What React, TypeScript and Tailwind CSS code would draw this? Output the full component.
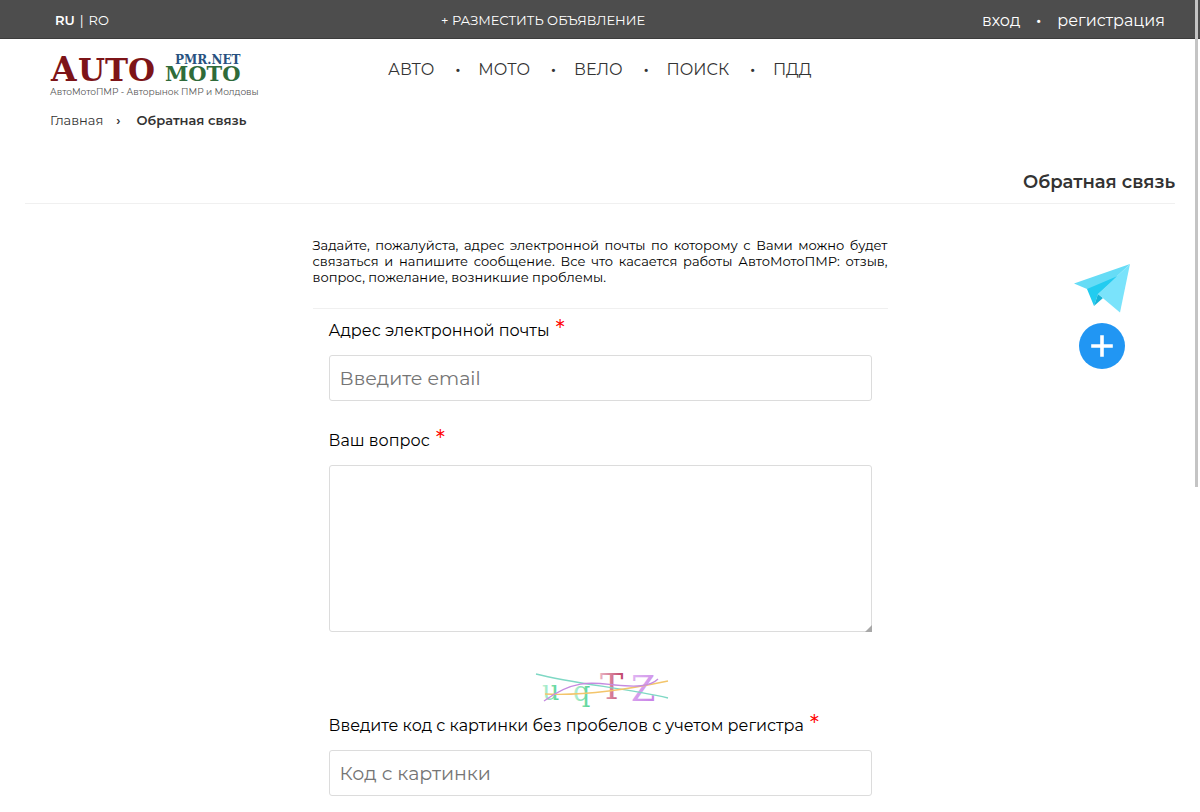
import React, { useState } from "react";
import { clsx } from "clsx";

const NAV_ITEMS = [
  { label: "АВТО", href: "#avto" },
  { label: "МОТО", href: "#moto" },
  { label: "ВЕЛО", href: "#velo" },
  { label: "ПОИСК", href: "#search" },
  { label: "ПДД", href: "#pdd" },
];

const INPUT_CLASS =
  "w-full rounded-[3px] border border-[#dcdcdc] bg-white px-[10px] text-[19px] text-gray-700 placeholder:text-[#757575] focus:border-sky-400 focus:outline-none";

function Logo() {
  return (
    <svg width="210" height="38" viewBox="0 0 210 38" role="img" aria-label="AutoMoto PMR.NET">
      <g fontFamily="'DejaVu Serif', serif" fontWeight="700">
        <text x="1" y="31" fontSize="33" fill="#7d1418">A</text>
        <text x="28" y="31" fontSize="31" fill="#7d1418">UTO</text>
        <text x="125" y="14" fontSize="12" fill="#27517f">PMR.NET</text>
        <text x="115" y="31" fontSize="21" fill="#2f6b3a">MOTO</text>
      </g>
    </svg>
  );
}

function Captcha() {
  return (
    <svg width="134" height="44" viewBox="0 0 134 44" role="img" aria-label="Код">
      <defs>
        <linearGradient id="green" x1="0" x2="1">
          <stop offset="0" stopColor="#c4f3da" />
          <stop offset="1" stopColor="#4fd08c" />
        </linearGradient>
        <linearGradient id="pink" x1="0" x2="1">
          <stop offset="0" stopColor="#eab3c2" />
          <stop offset="1" stopColor="#c04468" />
        </linearGradient>
        <linearGradient id="violet" x1="0" x2="1" y2="1">
          <stop offset="0" stopColor="#e3bdf4" />
          <stop offset="1" stopColor="#c478e4" />
        </linearGradient>
      </defs>
      <g fontFamily="'DejaVu Serif', serif">
        <text x="7" y="30" fontSize="27" fill="url(#green)">u</text>
        <text x="38" y="31" fontSize="27" fill="url(#green)">q</text>
        <text x="65" y="29" fontSize="35" fill="url(#pink)">T</text>
        <text x="96" y="31" fontSize="35" fill="url(#violet)">Z</text>
      </g>
      <g fill="none" strokeWidth="1.3">
        <path d="M1 4C40 14 90 18 133 28" stroke="#7fd8c4" />
        <path d="M10 24C50 26 90 20 133 11" stroke="#f3c56b" />
        <path d="M9 31C40 8 60 13 80 15S115 17 123 9" stroke="#c58be0" />
      </g>
    </svg>
  );
}

function PlaneIcon() {
  return (
    <svg width="56" height="49" viewBox="0 0 56 49" aria-hidden="true">
      <path d="M0 19.5 56 0 24 30 13 25Z" fill="#66dcf6" />
      <path d="M13 25 46 11 24 30 20 42Z" fill="#22ccf0" />
      <path d="M20 42 24 30 29 34Z" fill="#16b4d8" />
      <path d="M56 0 24 30 46 48.5Z" fill="#7ae3fb" />
    </svg>
  );
}

function PlusIcon() {
  return (
    <svg width="46" height="46" viewBox="0 0 46 46" aria-hidden="true">
      <circle cx="23" cy="23" r="23" fill="#2196f3" />
      <path d="M23 14v18M14 23h18" stroke="#fff" strokeWidth="3.6" strokeLinecap="square" />
    </svg>
  );
}

function Label({ htmlFor, children }: { htmlFor: string; children: React.ReactNode }) {
  return (
    <label htmlFor={htmlFor} className="mb-[2px] flex h-11 items-center gap-[6px] text-[16px] text-black">
      {children}
      <span className="pb-1 text-[24px] leading-6 text-[#f00]">*</span>
    </label>
  );
}

export default function App() {
  const [lang, setLang] = useState("RU");
  const [email, setEmail] = useState("");
  const [question, setQuestion] = useState("");
  const [code, setCode] = useState("");

  return (
    <div className="h-screen overflow-hidden bg-white font-['Montserrat','Inter',sans-serif] text-[#333]">
      {/* Top bar */}
      <header className="grid h-[39px] grid-cols-[386px_auto_1fr] items-center border-b border-[#3c3c3c] bg-[#4d4d4d] pt-[3px] pr-[35px] pl-[55px] text-white">
        <div className="flex gap-[5px] text-[13px]">
          <button onClick={() => setLang("RU")} className={clsx(lang === "RU" && "font-semibold")}>RU</button>
          <span>|</span>
          <button onClick={() => setLang("RO")} className={clsx(lang === "RO" && "font-semibold")}>RO</button>
        </div>
        <a href="#add" className="text-[13px]">+ РАЗМЕСТИТЬ ОБЪЯВЛЕНИЕ</a>
        <div className="flex items-center justify-end gap-4 text-[16px]">
          <a href="#login">вход</a>
          <span className="font-bold">·</span>
          <a href="#register">регистрация</a>
        </div>
      </header>

      <div className="grid grid-cols-[338px_auto] px-[50px] pt-[11px]">
        <a href="#home" className="flex flex-col">
          <Logo />
          <span className="-mt-1 text-[9px] leading-4 text-[#555]">АвтоМотоПМР - Авторынок ПМР и Молдовы</span>
        </a>
        <nav className="flex items-center self-start pt-2 text-[16px] leading-6">
          {NAV_ITEMS.map((item, i) => (
            <React.Fragment key={item.href}>
              {i > 0 && <span className="pr-[18px] pl-[21px] font-bold">·</span>}
              <a href={item.href}>{item.label}</a>
            </React.Fragment>
          ))}
        </nav>
      </div>

      <div className="flex items-center px-[50px] pt-[10px] text-[13px] leading-5">
        <a href="#home">Главная</a>
        <span className="pr-4 pl-[13px] font-semibold">›</span>
        <span className="font-semibold">Обратная связь</span>
      </div>

      <main className="px-[25px] pt-10">
        <h1 className="border-b border-[#f0f0f0] pb-[9px] text-right text-[18px] leading-6 font-semibold">Обратная связь</h1>

        <div className="grid grid-cols-4 pt-[33px]">
          <form className="col-span-2 col-start-2" onSubmit={(e) => e.preventDefault()}>
            <p className="border-b border-[#f0f0f0] pb-[23px] text-justify text-[13px] leading-4 text-black">
              Задайте, пожалуйста, адрес электронной почты по которому с Вами можно будет связаться и напишите
              сообщение. Все что касается работы АвтоМотоПМР: отзыв, вопрос, пожелание, возникшие проблемы.
            </p>

            <div className="px-4">
              <Label htmlFor="email">Адрес электронной почты</Label>
              <input
                id="email"
                type="email"
                value={email}
                onChange={(e) => setEmail(e.target.value)}
                placeholder="Введите email"
                className={clsx(INPUT_CLASS, "h-[46px]")}
              />

              <div className="pt-[18px]">
                <Label htmlFor="question">Ваш вопрос</Label>
                <div className="relative">
                  <textarea
                    id="question"
                    value={question}
                    onChange={(e) => setQuestion(e.target.value)}
                    className={clsx(INPUT_CLASS, "block h-[167px] resize-none py-2")}
                  />
                  <svg width="7" height="7" viewBox="0 0 7 7" className="absolute right-0 bottom-0" aria-hidden="true">
                    <path d="M7 0V7H0Z" fill="#a8a8a8" />
                  </svg>
                </div>
              </div>

              <div className="flex justify-center pt-[38px] pl-1">
                <Captcha />
              </div>
              <div className="-mt-[10px]">
                <Label htmlFor="code">Введите код с картинки без пробелов с учетом регистра</Label>
                <input
                  id="code"
                  type="text"
                  value={code}
                  onChange={(e) => setCode(e.target.value)}
                  placeholder="Код с картинки"
                  className={clsx(INPUT_CLASS, "h-[46px]")}
                />
              </div>
            </div>
          </form>

          <aside className="flex flex-col items-end pt-[27px] pr-[45px]">
            <div className="flex flex-col items-center gap-[10px]">
              <a href="#telegram" aria-label="Telegram"><PlaneIcon /></a>
              <a href="#add" aria-label="Разместить объявление"><PlusIcon /></a>
            </div>
          </aside>
        </div>
      </main>

      {/* Scroll thumb */}
      <div className="fixed top-0 right-[2px] h-[60vh] w-[3px] bg-[#c4c4c4]" />
    </div>
  );
}
